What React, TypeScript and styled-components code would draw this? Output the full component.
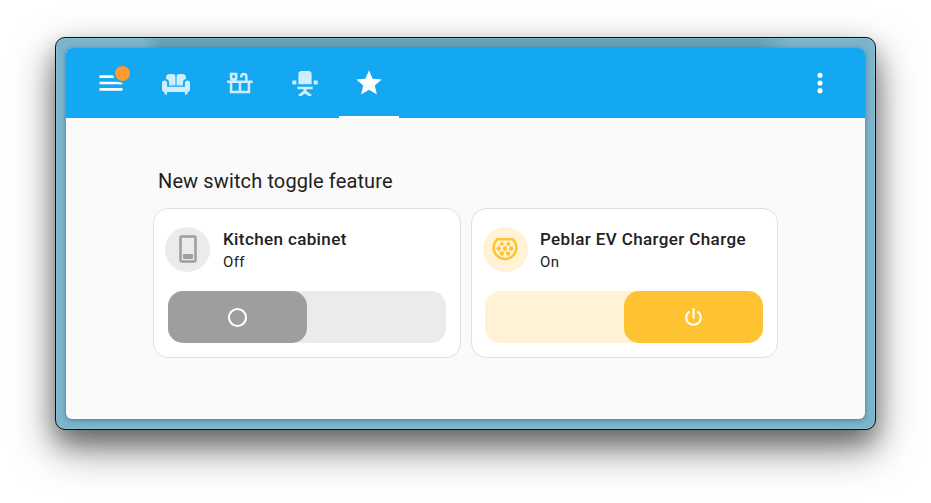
import React from "react";
import styled, { createGlobalStyle } from "styled-components";

const GlobalStyle = createGlobalStyle`
  * { box-sizing: border-box; }
  body { margin: 0; background: #fff; overflow: hidden; font-family: Roboto, sans-serif; color: #212121; }
`;

const Desktop = styled.div`
  width: 931px;
  height: 503px;
  padding: 37px 55px 0;
  background: #fff;
`;

const Frame = styled.div`
  width: 821px;
  height: 393px;
  padding: 10px;
  border: 1px solid #0b0e10;
  border-radius: 10px;
  background:
    linear-gradient(90deg, transparent 86px, #669fb7 106px, #669fb7 700px, transparent 735px) top / 100% 10px no-repeat,
    #7cb4cc;
  box-shadow: 0 18px 42px rgba(0, 0, 0, 0.5), 0 12px 22px rgba(0, 0, 0, 0.28),
    inset 0 0 0 1px rgba(160, 215, 235, 0.35);
`;

const Panel = styled.main`
  height: 371px;
  border-radius: 6px;
  overflow: hidden;
  background: #fafafa;
  box-shadow: 0 1px 5px rgba(0, 40, 60, 0.4);
`;

const Header = styled.header`
  height: 70px;
  padding: 0 15px;
  display: flex;
  align-items: stretch;
  background: #14a7f2;
`;

const MenuButton = styled.button`
  position: relative;
  width: 60px;
  padding: 0;
  border: 0;
  background: none;
  color: #fff;
  display: flex;
  align-items: center;
  justify-content: center;
`;

const Badge = styled.span`
  position: absolute;
  top: 18px;
  left: 34px;
  width: 15px;
  height: 15px;
  border-radius: 50%;
  background: #ff9a2e;
  box-shadow: 0 0 0 2px #14a7f2;
`;

const Tabs = styled.nav`
  display: flex;
  gap: 4.4px;
  margin-left: 5px;
  flex: 1;
`;

const Tab = styled.a<{ $active?: boolean }>`
  width: 60px;
  display: flex;
  align-items: center;
  justify-content: center;
  color: ${(p) => (p.$active ? "#fff" : "#cfeefd")};
  box-shadow: ${(p) => (p.$active ? "inset 0 -2px #fff" : "none")};
`;

const Content = styled.section`
  padding: 48px 87px 0;
`;

const Heading = styled.h1`
  margin: 0 0 12px 5px;
  font-size: 20px;
  line-height: 30px;
  font-weight: 400;
  letter-spacing: 0.12px;
`;

const Cards = styled.div`
  display: grid;
  grid-template-columns: 308px 307px;
  gap: 10px;
`;

const Card = styled.article<{ $inset?: number }>`
  height: 150px;
  border: 1px solid #e0e0e0;
  border-radius: 15px;
  background: #fff;
  padding: 18px 14px 14px ${(p) => p.$inset ?? 14}px;
`;

const CardHead = styled.div<{ $shift?: number }>`
  display: flex;
  gap: ${(p) => 13 - (p.$shift ?? 0)}px;
  margin-left: ${(p) => -3 + (p.$shift ?? 0)}px;
`;

const IconDisc = styled.div<{ $tint: string; $color: string }>`
  width: 45px;
  height: 45px;
  padding-bottom: 1px;
  border-radius: 50%;
  background: ${(p) => p.$tint};
  color: ${(p) => p.$color};
  display: flex;
  align-items: center;
  justify-content: center;
`;

const Name = styled.div`
  font-size: 17px;
  line-height: 24px;
  font-weight: 500;
  letter-spacing: 0.38px;
  white-space: nowrap;
`;

const State = styled.div`
  margin-top: 1px;
  font-size: 15px;
  line-height: 20px;
  letter-spacing: 0.4px;
`;

const Track = styled.div<{ $on?: boolean; $tint: string }>`
  height: 52px;
  width: 278px;
  margin-top: 19px;
  border-radius: 15px;
  background: ${(p) => p.$tint};
  display: flex;
  justify-content: ${(p) => (p.$on ? "flex-end" : "flex-start")};
`;

const Thumb = styled.div<{ $color: string }>`
  width: 139px;
  border-radius: 15px;
  background: ${(p) => p.$color};
  color: #fff;
  display: flex;
  align-items: center;
  justify-content: center;
`;

function Icon({
  size = 32,
  box = "-0.55 -0.55 25.1 25.1",
  children,
}: {
  size?: number;
  box?: string;
  children: React.ReactNode;
}) {
  return (
    <svg width={size} height={size} viewBox={box} fill="currentColor" fillRule="evenodd">
      {children}
    </svg>
  );
}

const Sofa = () => (
  <Icon>
    <path d="M7 5h2.600a2 2 0 0 1 2 2v7H6.600v-2a3.600 3.600 0 0 0-2.500-3.400V8A3 3 0 0 1 7 5zM17 5h-2.600a2 2 0 0 0-2 2v7h5v-2a3.600 3.600 0 0 1 2.500-3.400V8A3 3 0 0 0 17 5z" />
    <path d="M3 10a2 2 0 0 1 2 2v3h14v-3a2 2 0 0 1 4 0v5a2 2 0 0 1-2 2v2h-2v-2H5v2H3v-2a2 2 0 0 1-2-2v-5a2 2 0 0 1 2-2z" />
  </Icon>
);

const Countertop = () => (
  <Icon>
    <path d="M2 10h3.200A2.500 2.500 0 0 1 4 8V4h6v4a2.500 2.500 0 0 1-1.200 2H16V7a1 1 0 0 0-2 0v.6h-2V7a3 3 0 0 1 6 0v3h4v2h-2v8H4v-8H2zM6 6v2h2V6zM6 12v6h5v-6zM13 12v6h5v-6z" />
  </Icon>
);

const OfficeChair = () => (
  <Icon>
    <path d="M9.300 2.500h5.400A2.500 2.500 0 0 1 17.200 5v8H6.800V5a2.500 2.500 0 0 1 2.500-2.500zM2 10h3.200v3.200H2zM18.800 10H22v3.200h-3.200zM6 15h12v2h-4.800v1.200L17 21v1.200h-2.200L12 20.200l-2.800 2H7V21l3.800-2.800V17H6z" />
  </Icon>
);

const Star = () => (
  <Icon>
    <path d="M12 17.270 18.180 21l-1.640-7.030L22 9.240l-7.190-.62L12 2 9.190 8.620 2 9.240l5.450 4.730L5.820 21z" />
  </Icon>
);

const LightSwitch = () => (
  <Icon size={30} box="0 0 24 24">
    <path d="M7 1h10a2 2 0 0 1 2 2v18a2 2 0 0 1-2 2H7a2 2 0 0 1-2-2V3a2 2 0 0 1 2-2zm0 2v18h10V3z" />
    <rect x="8" y="16" width="8" height="4" rx="0.6" />
  </Icon>
);

const EvPlug = () => (
  <Icon size={30} box="0 0 24 24">
    <path
      d="M6 4.200h12a9.100 9.100 0 0 1 3.100 6.700C21.100 16 17 20 12 20S2.900 16 2.900 10.900A9.100 9.100 0 0 1 6 4.200z"
      fill="none"
      stroke="currentColor"
      strokeWidth="2"
      strokeLinejoin="round"
    />
    <circle cx="9.400" cy="7.900" r="1.500" />
    <circle cx="14.600" cy="7.900" r="1.500" />
    <circle cx="7" cy="11.500" r="1.800" />
    <circle cx="12" cy="11.500" r="1.800" />
    <circle cx="17" cy="11.500" r="1.800" />
    <circle cx="9.500" cy="15.600" r="1.800" />
    <circle cx="14.500" cy="15.600" r="1.800" />
  </Icon>
);

export default function App() {
  return (
    <>
      <GlobalStyle />
      <Desktop>
        <Frame>
          <Panel>
            <Header>
              <MenuButton aria-label="Menu">
                <Icon>
                  <path d="M3 6h18v2H3zM3 11h18v2H3zM3 16h18v2H3z" />
                </Icon>
                <Badge />
              </MenuButton>
              <Tabs>
                <Tab><Sofa /></Tab>
                <Tab><Countertop /></Tab>
                <Tab><OfficeChair /></Tab>
                <Tab $active><Star /></Tab>
              </Tabs>
              <MenuButton aria-label="More options">
                <Icon>
                  <circle cx="12" cy="6" r="2" />
                  <circle cx="12" cy="12" r="2" />
                  <circle cx="12" cy="18" r="2" />
                </Icon>
              </MenuButton>
            </Header>
            <Content>
              <Heading>New switch toggle feature</Heading>
              <Cards>
                <Card>
                  <CardHead>
                    <IconDisc $tint="#ebebeb" $color="#9e9e9e"><LightSwitch /></IconDisc>
                    <div>
                      <Name>Kitchen cabinet</Name>
                      <State>Off</State>
                    </div>
                  </CardHead>
                  <Track $tint="#ebebeb">
                    <Thumb $color="#9e9e9e">
                      <Icon size={25} box="0 0 24 24">
                        <circle cx="12" cy="12" r="8.200" fill="none" stroke="currentColor" strokeWidth="2" />
                      </Icon>
                    </Thumb>
                  </Track>
                </Card>
                <Card $inset={13}>
                  <CardHead $shift={0.5}>
                    <IconDisc $tint="#fff2d5" $color="#ffc233"><EvPlug /></IconDisc>
                    <div>
                      <Name>Peblar EV Charger Charge</Name>
                      <State>On</State>
                    </div>
                  </CardHead>
                  <Track $on $tint="#fff2d5">
                    <Thumb $color="#ffc233">
                      <Icon size={25} box="0 0 24 24">
                        <path d="M16.560 5.440l-1.450 1.450C16.840 7.940 18 9.830 18 12a6 6 0 0 1-12 0c0-2.170 1.160-4.060 2.880-5.120L7.440 5.440C5.360 6.880 4 9.280 4 12a8 8 0 0 0 16 0c0-2.720-1.360-5.120-3.440-6.560M13 3h-2v10h2" />
                      </Icon>
                    </Thumb>
                  </Track>
                </Card>
              </Cards>
            </Content>
          </Panel>
        </Frame>
      </Desktop>
    </>
  );
}
